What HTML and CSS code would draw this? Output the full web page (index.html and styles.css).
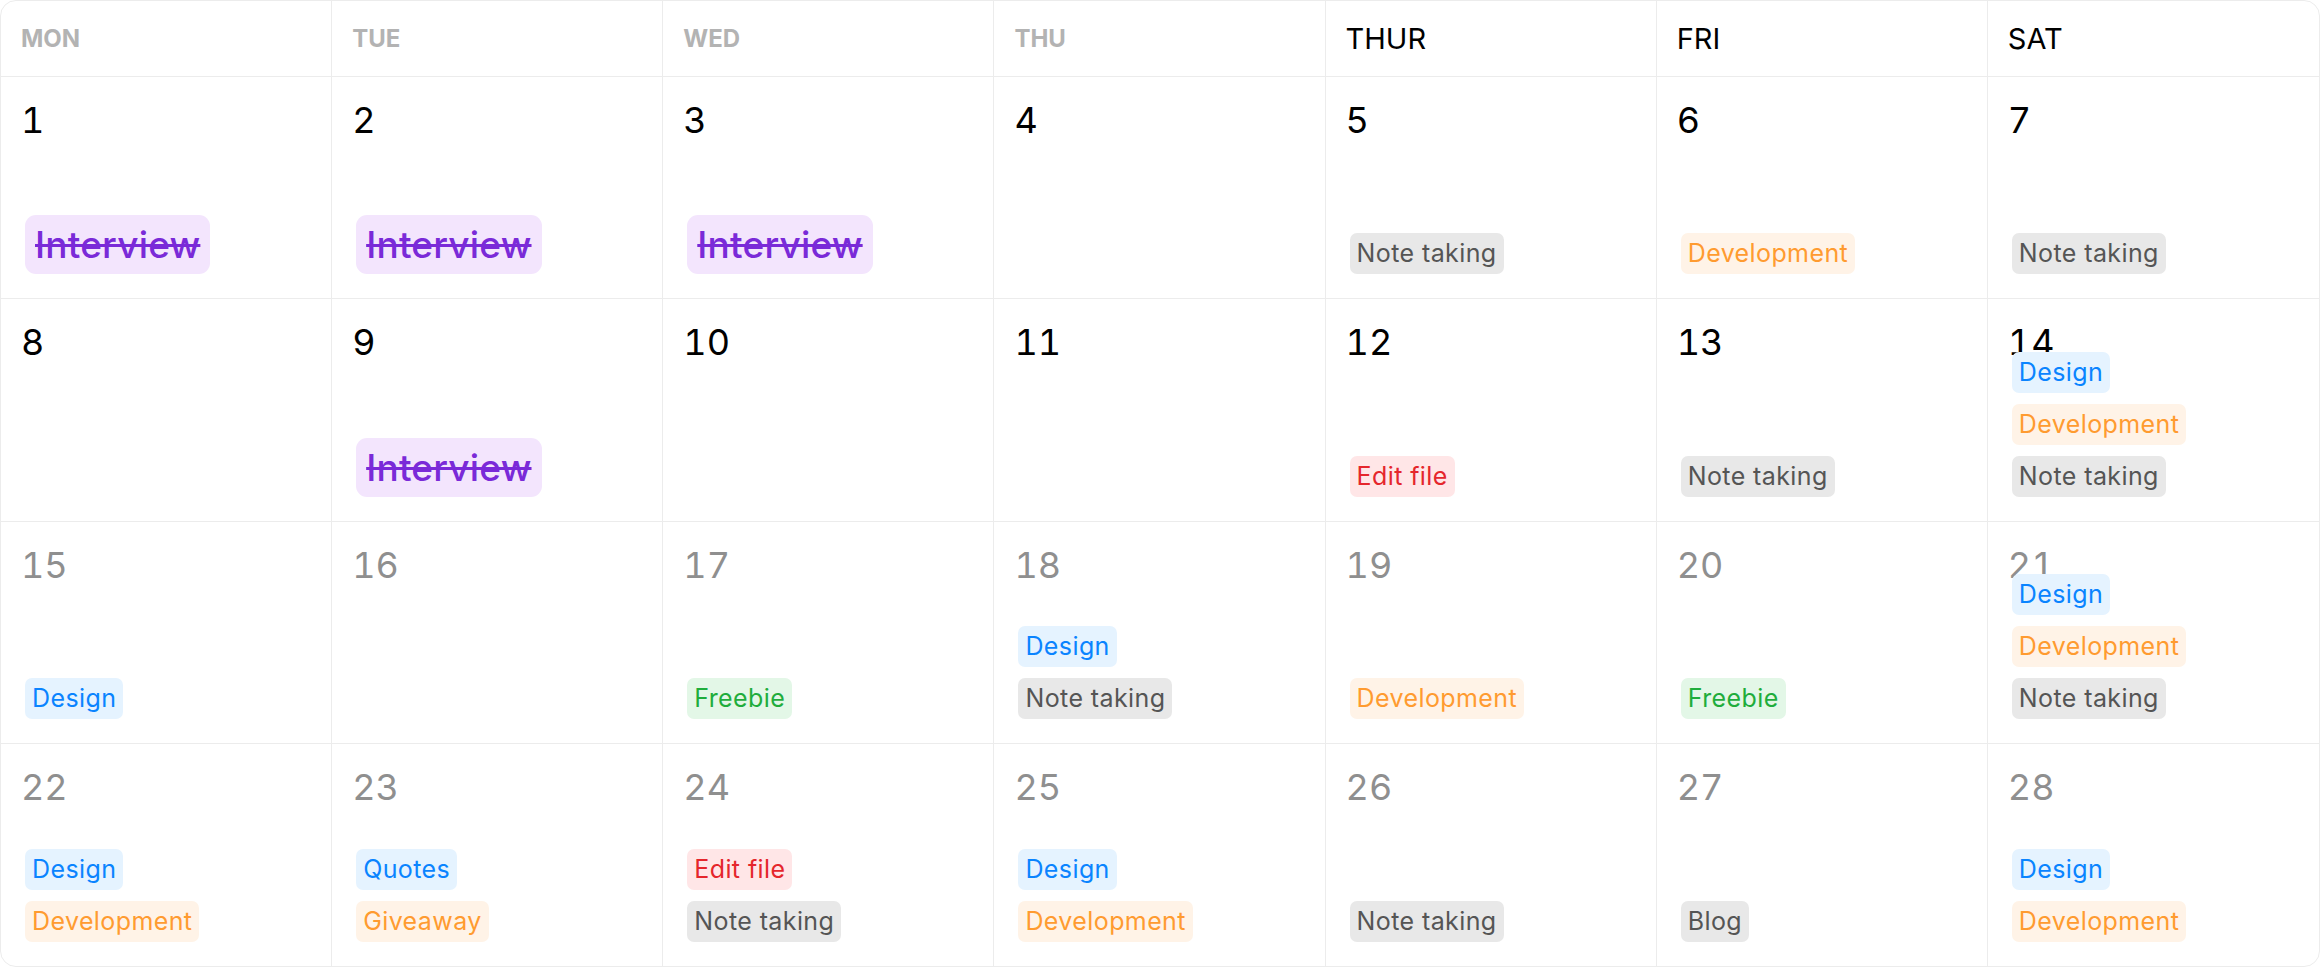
FILE: index.html
```html
<!DOCTYPE html>
<html lang="en">
<head>
<meta charset="utf-8">
<title>Calendar</title>
<link rel="stylesheet" href="styles.css">
</head>
<body>
<div class="calendar">
  <div class="head muted">MON</div>
  <div class="head muted">TUE</div>
  <div class="head muted">WED</div>
  <div class="head muted">THU</div>
  <div class="head">THUR</div>
  <div class="head">FRI</div>
  <div class="head last-col">SAT</div>

  <div class="cell"><div class="date">1</div><div class="tags"><span class="tag big purple">Interview</span></div></div>
  <div class="cell"><div class="date">2</div><div class="tags"><span class="tag big purple">Interview</span></div></div>
  <div class="cell"><div class="date">3</div><div class="tags"><span class="tag big purple">Interview</span></div></div>
  <div class="cell"><div class="date">4</div></div>
  <div class="cell"><div class="date">5</div><div class="tags"><span class="tag gray">Note taking</span></div></div>
  <div class="cell"><div class="date">6</div><div class="tags"><span class="tag orange">Development</span></div></div>
  <div class="cell last-col"><div class="date">7</div><div class="tags"><span class="tag gray">Note taking</span></div></div>

  <div class="cell"><div class="date">8</div></div>
  <div class="cell"><div class="date">9</div><div class="tags"><span class="tag big purple">Interview</span></div></div>
  <div class="cell"><div class="date">10</div></div>
  <div class="cell"><div class="date">11</div></div>
  <div class="cell"><div class="date">12</div><div class="tags"><span class="tag red">Edit file</span></div></div>
  <div class="cell"><div class="date">13</div><div class="tags"><span class="tag gray">Note taking</span></div></div>
  <div class="cell last-col"><div class="date">14</div><div class="tags"><span class="tag blue">Design</span><span class="tag orange">Development</span><span class="tag gray">Note taking</span></div></div>

  <div class="cell dim"><div class="date">15</div><div class="tags"><span class="tag blue">Design</span></div></div>
  <div class="cell dim"><div class="date">16</div></div>
  <div class="cell dim"><div class="date">17</div><div class="tags"><span class="tag green">Freebie</span></div></div>
  <div class="cell dim"><div class="date">18</div><div class="tags"><span class="tag blue">Design</span><span class="tag gray">Note taking</span></div></div>
  <div class="cell dim"><div class="date">19</div><div class="tags"><span class="tag orange">Development</span></div></div>
  <div class="cell dim"><div class="date">20</div><div class="tags"><span class="tag green">Freebie</span></div></div>
  <div class="cell dim last-col"><div class="date">21</div><div class="tags"><span class="tag blue">Design</span><span class="tag orange">Development</span><span class="tag gray">Note taking</span></div></div>

  <div class="cell dim last-row"><div class="date">22</div><div class="tags"><span class="tag blue">Design</span><span class="tag orange">Development</span></div></div>
  <div class="cell dim last-row"><div class="date">23</div><div class="tags"><span class="tag blue">Quotes</span><span class="tag orange">Giveaway</span></div></div>
  <div class="cell dim last-row"><div class="date">24</div><div class="tags"><span class="tag red">Edit file</span><span class="tag gray">Note taking</span></div></div>
  <div class="cell dim last-row"><div class="date">25</div><div class="tags"><span class="tag blue">Design</span><span class="tag orange">Development</span></div></div>
  <div class="cell dim last-row"><div class="date">26</div><div class="tags"><span class="tag gray">Note taking</span></div></div>
  <div class="cell dim last-row"><div class="date">27</div><div class="tags"><span class="tag gray">Blog</span></div></div>
  <div class="cell dim last-row last-col"><div class="date">28</div><div class="tags"><span class="tag blue">Design</span><span class="tag orange">Development</span></div></div>
</div>
</body>
</html>
```

FILE: styles.css
```css
* {
  box-sizing: border-box;
}

html, body {
  margin: 0;
  padding: 0;
  background: #ffffff;
}

body {
  font-family: Inter, "Noto Sans", "Liberation Sans", sans-serif;
  color: #000;
}

.calendar {
  width: 2320px;
  height: 967px;
  border: 1px solid #ececec;
  border-radius: 16px;
  overflow: hidden;
  display: grid;
  grid-template-columns: repeat(7, 1fr);
  grid-template-rows: 76px repeat(4, 1fr);
}

.head {
  display: flex;
  align-items: center;
  padding: 0 20px;
  border-right: 1px solid #ececec;
  border-bottom: 1px solid #ececec;
  font-size: 29px;
  font-weight: 400;
  color: #000;
}

.head.muted {
  font-size: 24px;
  font-weight: 700;
  color: #b3b3b3;
}

.cell {
  display: flex;
  flex-direction: column;
  min-height: 0;
  padding: 21px 20px 24px;
  border-right: 1px solid #ececec;
  border-bottom: 1px solid #ececec;
}

.last-col {
  border-right: none;
}

.last-row {
  border-bottom: none;
}

.date {
  flex: 0 1 auto;
  min-height: 0;
  font-size: 36px;
  line-height: normal;
  font-variant-numeric: tabular-nums;
  color: #000;
}

.cell.dim .date {
  color: #8f8f8f;
}

.tags {
  flex: 0 0 auto;
  margin-top: auto;
  margin-left: 4px;
  display: flex;
  flex-direction: column;
  align-items: flex-start;
  gap: 11px;
}

.tag {
  display: inline-block;
  font-size: 25px;
  letter-spacing: 0.4px;
  line-height: normal;
  padding: 5px 7px 6px;
  border-radius: 7px;
  white-space: nowrap;
}

.tag.big {
  font-size: 37px;
  letter-spacing: 0.2px;
  font-weight: 500;
  padding: 7px 10px;
  border-radius: 11px;
  text-decoration: line-through;
}

.purple {
  background: #f3e5fd;
  color: #7a2ad8;
}

.gray {
  background: #e8e8e8;
  color: #555555;
}

.orange {
  background: #fff3e7;
  color: #ff9b30;
}

.blue {
  background: #e5f3ff;
  color: #0a84ff;
}

.red {
  background: #ffe6e7;
  color: #e5262c;
}

.green {
  background: #e3f7e7;
  color: #1fad3c;
}
```
